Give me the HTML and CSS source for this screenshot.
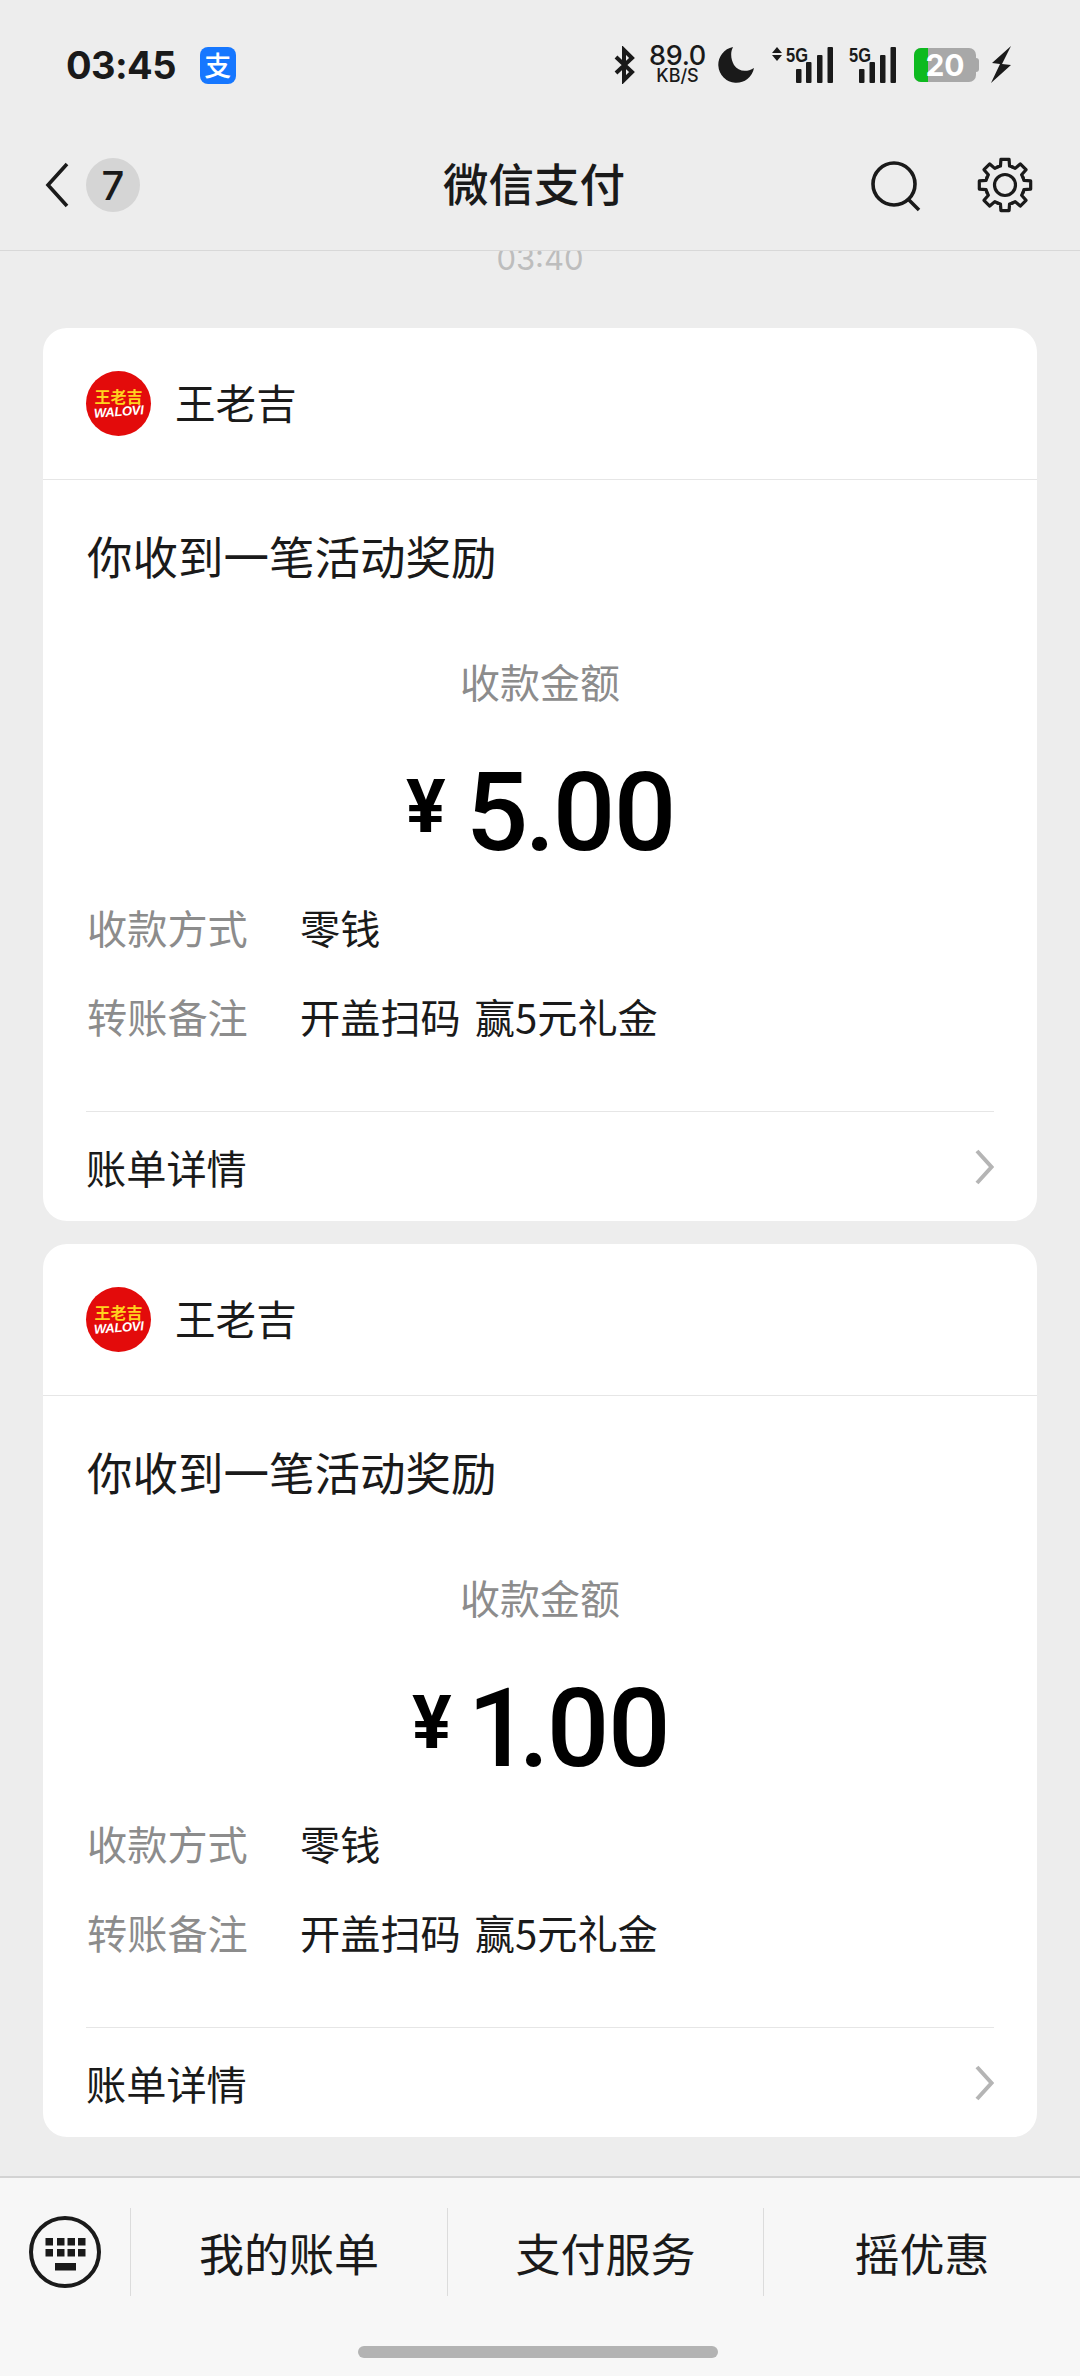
FILE: index.html
```html
<!DOCTYPE html>
<html lang="zh">
<head>
<meta charset="utf-8">
<title>微信支付</title>
<link rel="stylesheet" href="styles.css">
</head>
<body>
<div class="screen">
  <header class="status">
    <div class="status-left">
      <span class="time">03:45</span>
      <span class="alipay">支</span>
    </div>
    <div class="status-right">
      <svg class="i-bt" width="24" height="38" viewBox="0 0 24 38"><path d="M3 11 L19 26 L11 34 V4 L19 12 L3 27" fill="none" stroke="#1a1a1a" stroke-width="4"/></svg>
      <div class="speed"><span class="speed-num">89.0</span><span class="speed-unit">KB/S</span></div>
      <svg class="i-moon" width="37" height="37" viewBox="0 0 37 37"><path d="M15 1 A18 18 0 1 0 36 22 C28 27 20 25 16 19 C13 14 12 7 15 1 Z" fill="#1a1a1a"/></svg>
      <svg class="i-sig1" width="62" height="38" viewBox="0 0 62 38"><path d="M5 1 L10 7 H0 Z M5 15 L10 9 H0 Z" fill="#1a1a1a"/><text x="14" y="16" class="sig-text" textLength="22" lengthAdjust="spacingAndGlyphs">5G</text><rect x="24" y="23" width="5.500" height="14" rx="1" fill="#1a1a1a"/><rect x="34" y="16" width="5.500" height="21" rx="1" fill="#1a1a1a"/><rect x="45" y="9" width="5.500" height="28" rx="1" fill="#1a1a1a"/><rect x="55.500" y="1" width="5.500" height="36" rx="1" fill="#1a1a1a"/></svg>
      <svg class="i-sig2" width="48" height="38" viewBox="0 0 48 38"><text x="0" y="16" class="sig-text" textLength="22" lengthAdjust="spacingAndGlyphs">5G</text><rect x="10" y="23" width="5.500" height="14" rx="1" fill="#1a1a1a"/><rect x="20.500" y="16" width="5.500" height="21" rx="1" fill="#1a1a1a"/><rect x="31" y="9" width="5.500" height="28" rx="1" fill="#1a1a1a"/><rect x="41.500" y="1" width="5.500" height="36" rx="1" fill="#1a1a1a"/></svg>
      <div class="battery"><div class="batt-body"><span class="batt-fill"></span><span class="batt-num">20</span></div><span class="batt-tip"></span></div>
      <svg class="i-bolt" width="21" height="38" viewBox="0 0 21 38"><path d="M20 0 L1 17 L9 18 L0 37 L20 19 L11 18 Z" fill="#1a1a1a"/></svg>
    </div>
  </header>

  <nav class="nav">
    <div class="nav-left">
      <svg class="back" width="26" height="48" viewBox="0 0 26 48"><path d="M23 3 L4 24 L23 45" fill="none" stroke="#1a1a1a" stroke-width="3.6"/></svg>
      <span class="badge">7</span>
    </div>
    <h1 class="nav-title">微信支付</h1>
    <div class="nav-right">
      <svg class="i-search" width="52" height="54" viewBox="0 0 52 54"><circle cx="24" cy="24" r="21" fill="none" stroke="#1a1a1a" stroke-width="3.6"/><path d="M38 39 L49 50" stroke="#1a1a1a" stroke-width="3.6" fill="none"/></svg>
      <svg width="56" height="56" viewBox="-28 -28 56 56"><defs><path id="tooth" d="M-7.46 -18.02 L-4.55 -18.96 L-4.07 -25.68 L4.07 -25.68 L4.55 -18.96 L7.46 -18.02"/></defs><g fill="none" stroke="#1a1a1a" stroke-width="3.2" stroke-linejoin="round" stroke-linecap="round"><circle r="10.5"/><use href="#tooth"/><use href="#tooth" transform="rotate(45)"/><use href="#tooth" transform="rotate(90)"/><use href="#tooth" transform="rotate(135)"/><use href="#tooth" transform="rotate(180)"/><use href="#tooth" transform="rotate(225)"/><use href="#tooth" transform="rotate(270)"/><use href="#tooth" transform="rotate(315)"/></g></svg>
    </div>
  </nav>

  <main class="feed">
    <div class="stamp">03:40</div>

    <article class="card">
      <div class="card-head">
        <span class="logo"><span class="logo-cn">王老吉</span><span class="logo-en">WALOVI</span></span>
        <span class="brand">王老吉</span>
      </div>
      <div class="card-title">你收到一笔活动奖励</div>
      <div class="amount-label">收款金额</div>
      <div class="amount"><span class="yen">¥</span><span class="num">5.00</span></div>
      <div class="rows">
        <div class="row"><span class="row-key">收款方式</span><span class="row-val">零钱</span></div>
        <div class="row"><span class="row-key">转账备注</span><span class="row-val">开盖扫码 赢5元礼金</span></div>
      </div>
      <div class="card-foot">
        <span>账单详情</span>
        <svg width="20" height="36" viewBox="0 0 20 36"><path d="M3 2 L17.500 18 L3 34" fill="none" stroke="#b5b5b5" stroke-width="4"/></svg>
      </div>
    </article>

    <article class="card">
      <div class="card-head">
        <span class="logo"><span class="logo-cn">王老吉</span><span class="logo-en">WALOVI</span></span>
        <span class="brand">王老吉</span>
      </div>
      <div class="card-title">你收到一笔活动奖励</div>
      <div class="amount-label">收款金额</div>
      <div class="amount"><span class="yen">¥</span><span class="num">1.00</span></div>
      <div class="rows">
        <div class="row"><span class="row-key">收款方式</span><span class="row-val">零钱</span></div>
        <div class="row"><span class="row-key">转账备注</span><span class="row-val">开盖扫码 赢5元礼金</span></div>
      </div>
      <div class="card-foot">
        <span>账单详情</span>
        <svg width="20" height="36" viewBox="0 0 20 36"><path d="M3 2 L17.500 18 L3 34" fill="none" stroke="#b5b5b5" stroke-width="4"/></svg>
      </div>
    </article>
  </main>

  <footer class="toolbar">
    <div class="tabs">
      <div class="tab-kb">
        <svg width="72" height="74" viewBox="0 0 72 74"><circle cx="36" cy="37" r="34" fill="none" stroke="#1a1a1a" stroke-width="4"/><g fill="#1a1a1a"><rect x="16.500" y="23" width="7.500" height="7.500"/><rect x="28" y="23" width="7.500" height="7.500"/><rect x="38.500" y="23" width="7.500" height="7.500"/><rect x="49" y="23" width="7.500" height="7.500"/><rect x="16.500" y="34" width="7.500" height="7.500"/><rect x="28" y="34" width="7.500" height="7.500"/><rect x="38.500" y="34" width="7.500" height="7.500"/><rect x="49" y="34" width="7.500" height="7.500"/><rect x="26" y="48" width="21" height="7.500"/></g></svg>
      </div>
      <div class="tab">我的账单</div>
      <div class="tab">支付服务</div>
      <div class="tab">摇优惠</div>
    </div>
    <div class="home-bar"></div>
  </footer>
</div>
</body>
</html>
```
FILE: styles.css
```css
* { box-sizing: border-box; }
html, body { margin: 0; padding: 0; }
body {
  width: 1080px;
  height: 2376px;
  overflow: hidden;
  background: #ededed;
  color: #1a1a1a;
  font-family: "Noto Sans CJK SC", "Noto Sans", sans-serif;
}
.screen { width: 1080px; height: 2376px; display: flex; flex-direction: column; }

/* status bar */
.status {
  height: 130px;
  padding: 45px 68px 0 66px;
  display: flex;
  justify-content: space-between;
  align-items: flex-start;
}
.status-left { display: flex; align-items: center; gap: 24px; height: 40px; }
.time { font-family: Inter, sans-serif; font-weight: 700; font-size: 38px; line-height: 40px; letter-spacing: -0.6px; }
.alipay {
  width: 36px; height: 37px; border-radius: 8px;
  background: #1677ff; color: #fff;
  display: flex; align-items: center; justify-content: center;
  font-size: 27px; line-height: 36px; font-weight: 500;
}
.status-right { display: flex; align-items: flex-start; height: 40px; margin-top: -1px; }
.i-bt { margin-right: 12px; margin-top: 2px; }
.speed { display: flex; flex-direction: column; align-items: center; width: 57px; margin-right: 12px; }
.speed-num { font-family: Inter, sans-serif; font-size: 27px; line-height: 24px; font-weight: 500; letter-spacing: -0.3px; }
.speed-unit { font-family: Inter, sans-serif; font-size: 18px; line-height: 16px; font-weight: 500; }
.i-moon { margin-right: 17px; margin-top: 2px; }
.i-sig1 { margin-right: 15px; margin-top: 2px; overflow: visible; }
.i-sig2 { margin-right: 17px; margin-top: 2px; overflow: visible; }
.sig-text { font-family: "Liberation Sans", sans-serif; font-weight: 700; font-size: 20px; fill: #1a1a1a; }
.battery { display: flex; align-items: center; margin-top: 4px; margin-right: 12px; }
.batt-body {
  position: relative;
  width: 62px; height: 34px; border-radius: 7px;
  background: #a8a8a8; overflow: hidden;
  display: flex; align-items: center; justify-content: center;
}
.batt-fill { position: absolute; left: 0; top: 0; bottom: 0; width: 14px; background: #0dba1f; }
.batt-num { position: relative; color: #fff; font-family: Inter, sans-serif; font-weight: 700; font-size: 30px; line-height: 34px; }
.batt-tip { width: 3px; height: 14px; background: #a8a8a8; border-radius: 0 3px 3px 0; }
.i-bolt { margin-top: 2px; }

/* nav */
.nav {
  position: relative;
  height: 121px;
  border-bottom: 1px solid #d8d8d8;
  display: flex;
  align-items: flex-start;
  justify-content: space-between;
  padding: 0 47px 0 44px;
  flex: none;
}
.nav-left { display: flex; align-items: center; gap: 16px; height: 54px; margin-top: 28px; }
.badge {
  width: 54px; height: 54px; border-radius: 50%;
  background: #d5d5d5;
  display: flex; align-items: center; justify-content: center;
  font-family: Inter, sans-serif; font-size: 40px; font-weight: 500;
}
.nav-title {
  position: absolute; left: 0; right: 12px; top: 18px; margin: 0;
  text-align: center; font-size: 45.5px; line-height: 68px; font-weight: 500;
}
.nav-right { display: flex; align-items: center; gap: 55px; height: 56px; margin-top: 27px; }
.i-search { margin-top: 4px; }

/* feed */
.feed { flex: 1; min-height: 0; overflow: hidden; padding: 0 43px; }
.stamp {
  margin-top: -12px; height: 40px;
  text-align: center; font-size: 31px; line-height: 40px; color: #bdbdbd;
  font-family: Inter, "Noto Sans", sans-serif;
  margin-bottom: 49px;
}
.card { background: #fff; border-radius: 24px; height: 893px; margin-bottom: 23px; display: flex; flex-direction: column; }
.card-head {
  height: 152px; border-bottom: 1px solid #e6e6e6;
  padding: 0 43px; display: flex; align-items: center; gap: 24px; flex: none;
}
.logo {
  width: 65px; height: 65px; border-radius: 50%;
  background: #e30b0b; display: flex; flex-direction: column; align-items: center; justify-content: center;
  overflow: hidden; flex: none;
}
.logo-cn { color: #ffd21f; font-size: 16px; line-height: 18px; font-weight: 700; margin-top: -2px; }
.logo-en {
  color: #fff; font-family: "Liberation Sans", sans-serif; font-style: italic; font-weight: 700;
  font-size: 13px; line-height: 14px; transform: rotate(-4deg); letter-spacing: -0.3px;
}
.brand { font-size: 40.6px; line-height: 56px; margin-bottom: 3px; }
.card-title { margin: 45px 44px 0; font-size: 45.5px; line-height: 60px; }
.amount-label { margin-top: 71px; text-align: center; color: #8c8c8c; font-size: 40px; line-height: 50px; }
.amount {
  margin-top: 52px; height: 110px; display: flex; align-items: center; justify-content: center; gap: 20px; color: #000;
  font-family: Roboto, sans-serif;
}
.yen { font-size: 74px; line-height: 110px; font-weight: 700; margin-top: -13px; }
.num { font-size: 110px; line-height: 110px; font-weight: 500; letter-spacing: -3.5px; font-variant-numeric: proportional-nums; }
.rows { margin-top: 14px; padding: 0 44px; }
.row { height: 89px; display: flex; align-items: center; font-size: 40.2px; }
.row-key { width: 213px; color: #8c8c8c; flex: none; }
.row-val { color: #1a1a1a; word-spacing: 5px; }
.card-foot {
  margin: 51px 43px 0; flex: 1;
  border-top: 1px solid #e6e6e6;
  display: flex; align-items: center; justify-content: space-between; font-size: 40.2px;
}

/* toolbar */
.toolbar { height: 200px; flex: none; background: #f7f7f7; border-top: 2px solid #d3d3d3; padding-top: 30px; }
.tabs { height: 88px; display: grid; grid-template-columns: 130px 317px 316px 317px; }
.tab-kb { display: flex; align-items: center; justify-content: center; }
.tab {
  border-left: 1px solid #dcdcdc;
  display: flex; align-items: center; justify-content: center;
  font-size: 45px;
}
.home-bar { width: 360px; height: 12px; border-radius: 6px; background: #b3b3b3; margin: 50px 0 0 358px; }
```
